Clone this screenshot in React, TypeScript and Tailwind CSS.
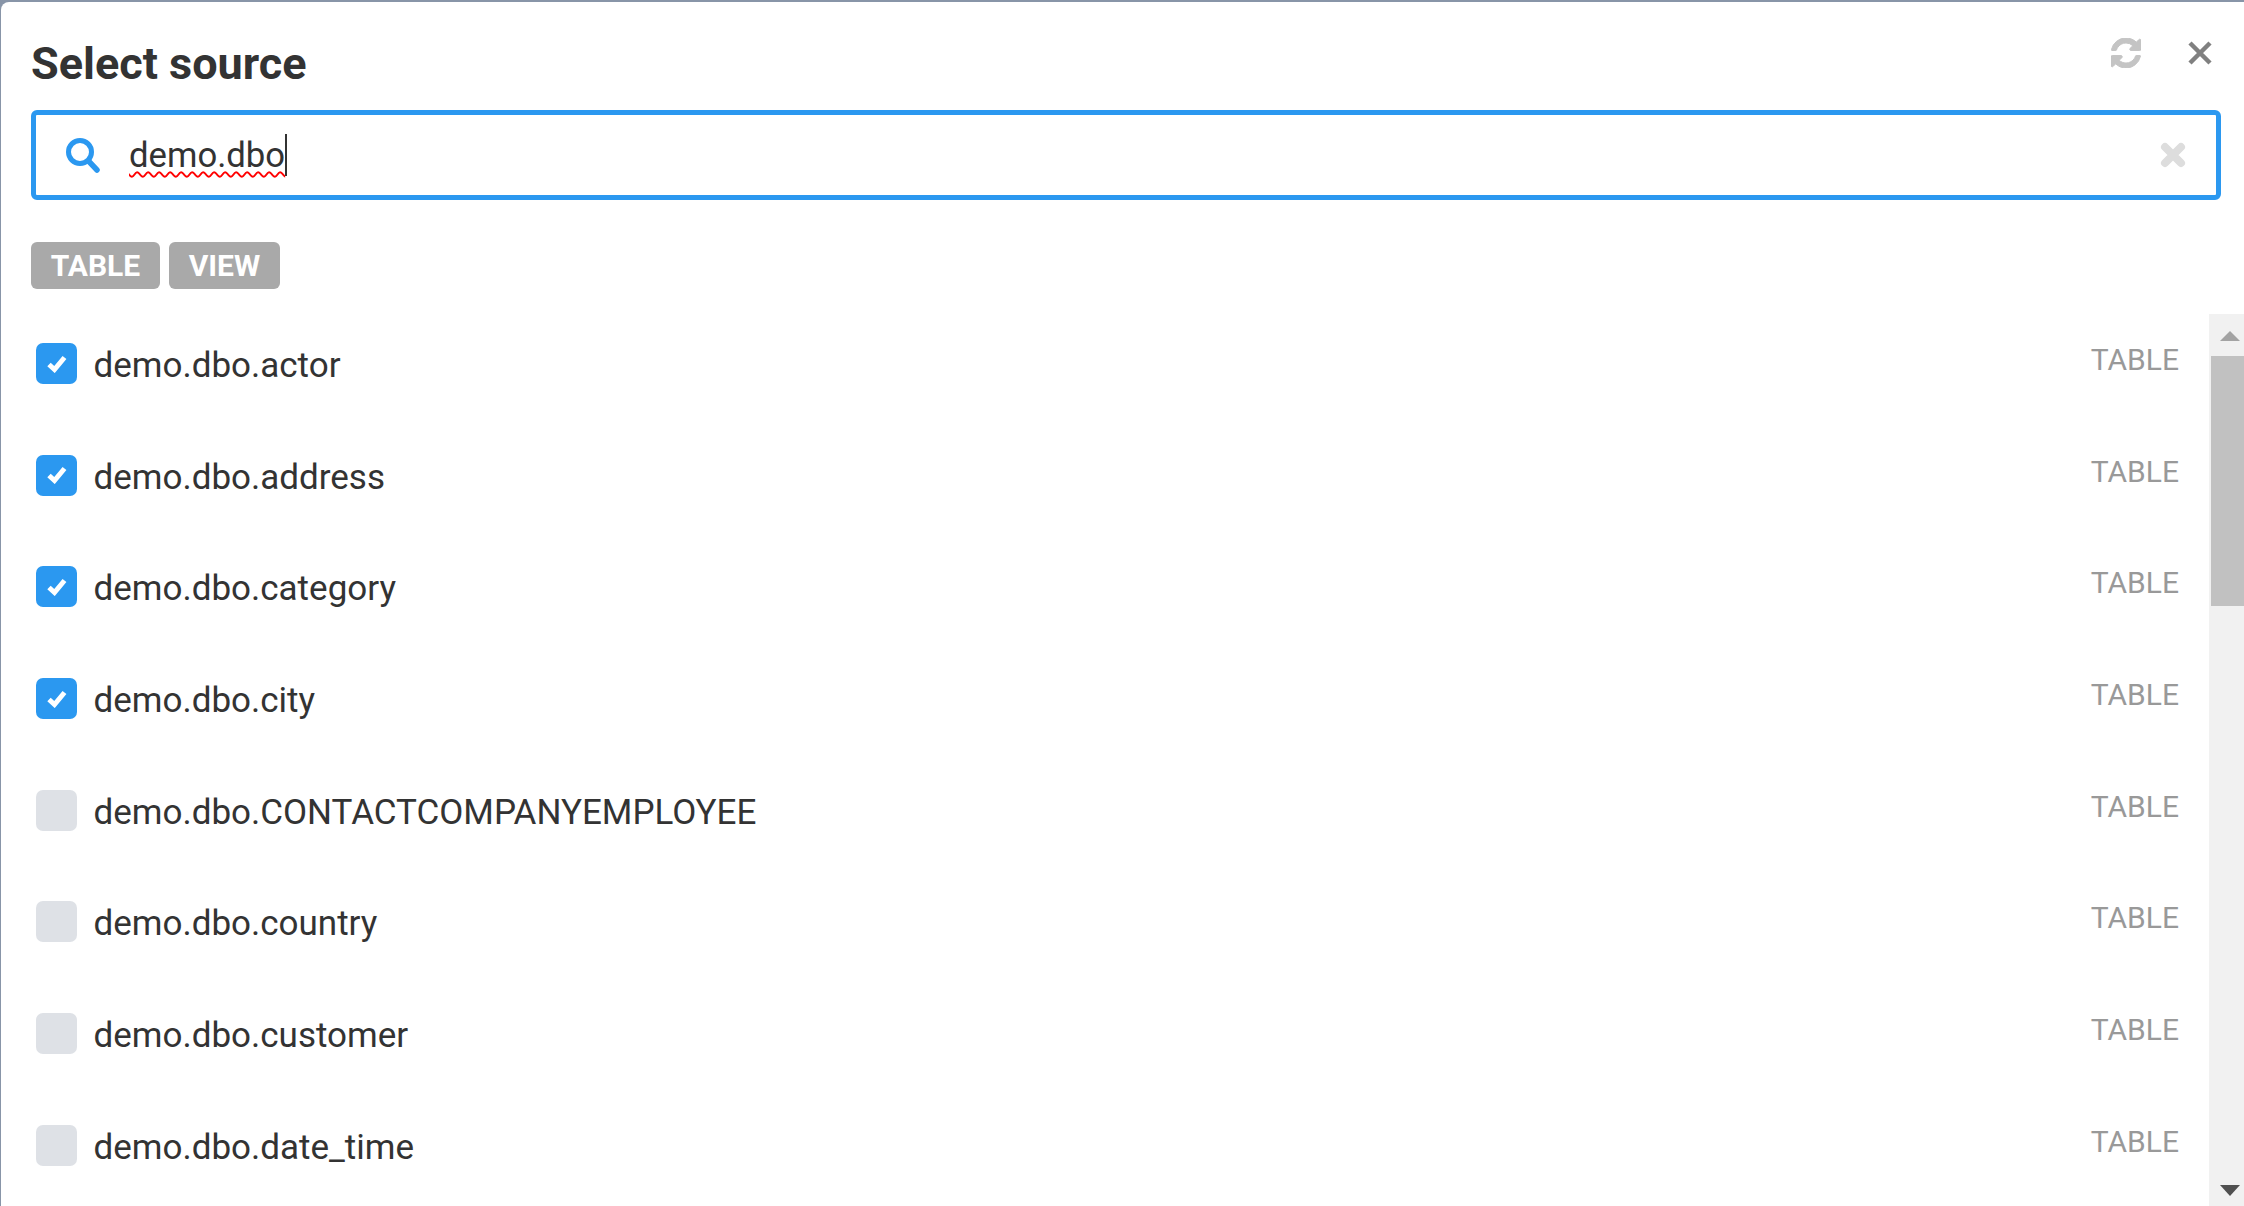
const rows: [string, boolean][] = [
  ["demo.dbo.actor", true],
  ["demo.dbo.address", true],
  ["demo.dbo.category", true],
  ["demo.dbo.city", true],
  ["demo.dbo.CONTACTCOMPANYEMPLOYEE", false],
  ["demo.dbo.country", false],
  ["demo.dbo.customer", false],
  ["demo.dbo.date_time", false],
];

function Row({ name, checked }: { name: string; checked: boolean }) {
  return (
    <div className="flex h-[111.7px] shrink-0 items-start pl-[35px] pt-[29px] pr-[30px]">
      <div
        className={`flex h-[41px] w-[41px] shrink-0 items-center justify-center rounded-[7px] ${
          checked ? "bg-[#2b98f0]" : "bg-[#dee1e6]"
        }`}
      >
        {checked && (
          <svg width="20" height="18" viewBox="0 0 20 18" fill="none">
            <path d="M2 9.5 L7.5 14.5 L17.5 2.5" stroke="#ffffff" strokeWidth="5" strokeLinejoin="miter" />
          </svg>
        )}
      </div>
      <div className="ml-[16.5px] mt-[2px] text-[35px] leading-[41px] text-[#333333]">{name}</div>
      <div className="ml-auto -mt-[4px] text-[30px] leading-[41px] font-normal text-[#999999]">TABLE</div>
    </div>
  );
}

export default function App() {
  return (
    <div className="h-[1206px] w-[2244px] overflow-hidden bg-[#8895a8] pl-[1px] pt-[2px] font-['Roboto',sans-serif]">
      <div className="flex h-[1204px] flex-col rounded-tl-[8px] bg-white">
        <div className="flex h-[108px] shrink-0 items-start justify-between pl-[30px]">
          <div className="mt-[36px] text-[45px] font-bold leading-[52px] text-[#333333]">Select source</div>
          <div className="mr-[32px] mt-[36px] flex items-center gap-[47px]">
            <svg width="30" height="30" viewBox="0 0 1536 1536" fill="#c4c4c4" stroke="#c4c4c4" strokeWidth="50">
              <path d="M1511 928q0 5-1 7-64 268-268 434.5T764 1536q-146 0-282.5-55T238 1324l-129 129q-19 19-45 19t-45-19-19-45V960q0-26 19-45t45-19h448q26 0 45 19t19 45-19 45l-137 137q71 66 161 102t187 36q134 0 250-65t186-179q11-17 53-117 8-23 30-23h192q13 0 22.5 9.5t9.5 22.5zm25-800v448q0 26-19 45t-45 19h-448q-26 0-45-19t-19-45 19-45l138-138q-148-137-349-137-134 0-250 65T332 500q-11 17-53 117-8 23-30 23H50q-13 0-22.5-9.5T18 608v-7q65-268 270-434.5T768 0q146 0 284 55.5T1297 212l130-129q19-19 45-19t45 19 19 45z" />
            </svg>
            <svg width="24" height="24" viewBox="0 0 24 24" fill="none">
              <path d="M2 2 L22 22 M22 2 L2 22" stroke="#808080" strokeWidth="4.5" />
            </svg>
          </div>
        </div>
        <div className="ml-[30px] mr-[23px] flex h-[90px] shrink-0 items-center rounded-[6px] border-[5px] border-[#2b98f0] pl-[29px] pr-[30px]">
          <svg width="36" height="36" viewBox="0 0 36 36" fill="none" className="shrink-0">
            <circle cx="15" cy="15" r="11.5" stroke="#2b98f0" strokeWidth="5" />
            <path d="M23.5 24 L32 33" stroke="#2b98f0" strokeWidth="5.5" strokeLinecap="round" />
          </svg>
          <div className="ml-[28px] -mr-[1px] border-r-2 border-[#333333] pr-0 text-[34.7px] leading-[42px] text-[#333333] underline decoration-[#ff0000] decoration-wavy decoration-[2px] underline-offset-[4px]">
            demo.dbo
          </div>
          <svg width="26" height="26" viewBox="0 0 26 26" fill="none" className="ml-auto">
            <path d="M5 5 L21 21 M21 5 L5 21" stroke="#dddddd" strokeWidth="8" strokeLinecap="round" />
          </svg>
        </div>
        <div className="ml-[30px] mt-[42px] flex shrink-0 gap-[9px]">
          <div className="flex h-[47px] w-[129px] items-center justify-center rounded-[6px] bg-[#a9a9a9] text-[30px] font-bold text-white">
            TABLE
          </div>
          <div className="flex h-[47px] w-[111px] items-center justify-center rounded-[6px] bg-[#a9a9a9] text-[30px] font-bold text-white">
            VIEW
          </div>
        </div>
        <div className="mt-[25px] flex min-h-0 flex-1">
          <div className="flex min-w-0 flex-1 flex-col overflow-hidden">
            {rows.map(([name, checked]) => (
              <Row key={name} name={name} checked={checked} />
            ))}
          </div>
          <div className="relative flex w-[35px] shrink-0 flex-col bg-[#f1f1f1]">
            <div className="flex h-[42px] shrink-0 items-center justify-center pl-[7px] pt-[1px]">
              <div className="h-0 w-0 border-x-[10px] border-b-[10px] border-x-transparent border-b-[#a3a3a3]" />
            </div>
            <div className="ml-[2px] h-[250px] shrink-0 bg-[#c1c1c1]" />
            <div className="mt-auto flex h-[28px] shrink-0 items-start justify-center pl-[7px] pt-[7px]">
              <div className="h-0 w-0 border-x-[10px] border-t-[11px] border-x-transparent border-t-[#505050]" />
            </div>
          </div>
        </div>
      </div>
    </div>
  );
}
